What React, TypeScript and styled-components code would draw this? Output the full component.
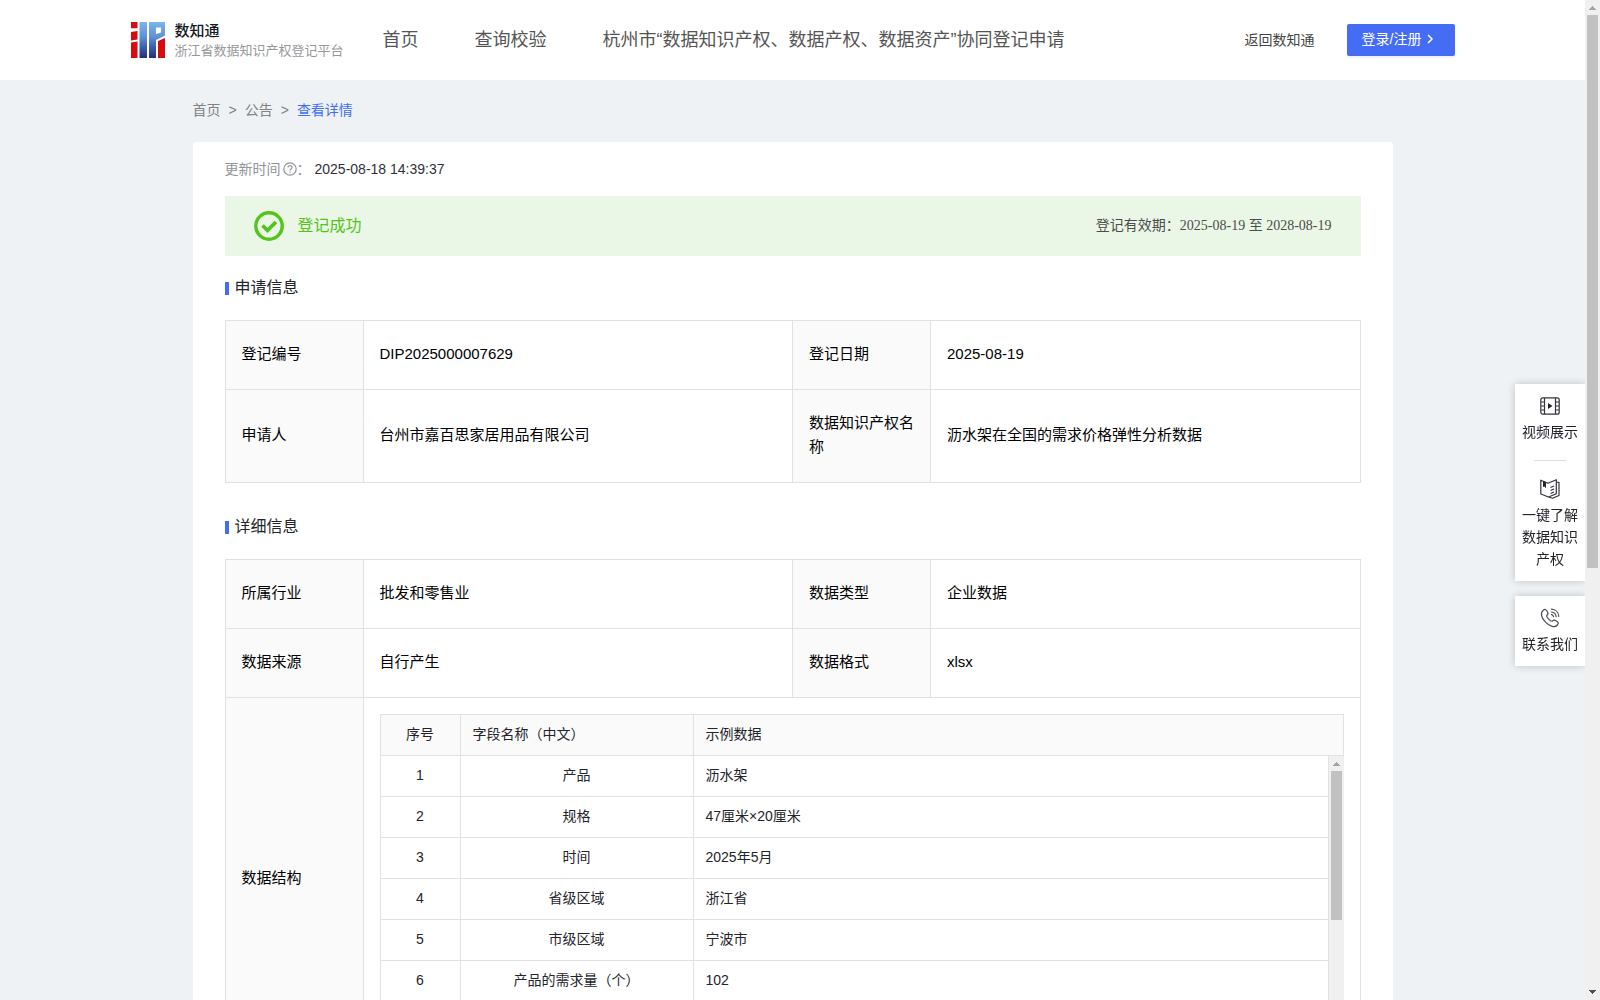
import React from "react";
import styled, { createGlobalStyle, css } from "styled-components";

const GlobalStyle = createGlobalStyle`
  *, *::before, *::after { box-sizing: border-box; }
  body {
    margin: 0;
    background: #eef2f5;
    color: #23242b;
    font: 14px/22px "Liberation Sans", "Noto Sans CJK SC", sans-serif;
  }
  a { color: inherit; text-decoration: none; }
`;

const Shell = styled.div`
  display: flex;
  height: 100vh;
`;
const Viewport = styled.div`
  flex: 1;
  min-width: 0;
  overflow-y: auto;
  scrollbar-width: none;
`;

const Rail = styled.div`
  display: flex;
  flex-direction: column;
  align-items: center;
  flex: none;
  width: 15px;
  background: #f0f0f0;
`;
const Track = styled.div`
  flex: 1;
  width: 11px;
`;
const Thumb = styled.div<{ $size: string }>`
  height: ${(p) => p.$size};
  background: #c1c1c1;
`;

const Header = styled.header`
  height: 80px;
  background: #fff;
`;
const HeaderInner = styled.div`
  display: flex;
  align-items: center;
  width: min(1324px, 100%);
  height: 100%;
  margin: 0 auto;
`;
const Brand = styled.a`
  display: flex;
  align-items: center;
  gap: 10px;
  width: 252px;
`;
const BrandText = styled.span`
  display: flex;
  flex-direction: column;
  padding-top: 2px;
  white-space: nowrap;
`;
const BrandName = styled.strong`
  font-size: 15px;
  line-height: 20px;
  font-weight: 500;
  color: #16181d;
`;
const BrandSub = styled.span`
  font-size: 13px;
  line-height: 20px;
  color: #97989c;
`;
const Nav = styled.nav`
  display: flex;
  flex: 1;
  gap: 56px;
  font-size: 18px;
  line-height: 24px;
  color: #555;
  white-space: nowrap;
`;
const BackLink = styled.a`
  margin-right: 32px;
  color: #444;
  white-space: nowrap;
`;
const LoginButton = styled.button`
  display: flex;
  align-items: center;
  gap: 2px;
  width: 108px;
  height: 32px;
  padding: 0 15px 2px;
  border: 0;
  border-radius: 2px;
  background: #446cf5;
  box-shadow: 0 2px 0 rgba(0, 0, 0, 0.05);
  color: #fff;
  font: inherit;
  white-space: nowrap;
`;

const Page = styled.main`
  width: min(1200px, 100%);
  margin: 0 auto;
`;
const Breadcrumb = styled.nav`
  display: flex;
  gap: 8px;
  padding: 19px 0 21px;
  color: #808285;
`;
const Current = styled.a`
  color: #446cf5;
`;
const Card = styled.article`
  padding: 16px 32px;
  border-radius: 4px;
  background: #fff;
`;
const Updated = styled.div`
  display: flex;
  align-items: center;
  color: #929398;
  svg { margin-left: 2px; }
  time { margin-left: 4px; color: #303138; }
`;
const Banner = styled.div`
  display: flex;
  align-items: center;
  gap: 14px;
  height: 60px;
  margin-top: 16px;
  padding: 0 29px;
  background: #ebf7e6;
`;
const Status = styled.span`
  flex: 1;
  font-size: 16px;
  color: #52c41a;
`;
const Validity = styled.span`
  color: #4a4d4a;
  font-family: "Liberation Serif", "Noto Sans CJK SC", serif;
`;
const SectionTitle = styled.h2`
  display: flex;
  align-items: center;
  gap: 6px;
  margin: 20px 0;
  font-size: 16px;
  line-height: 24px;
  font-weight: 400;
  &::before {
    content: "";
    width: 4px;
    height: 13px;
    background: #446cf5;
  }
`;
const Info = styled.table`
  width: 100%;
  margin-bottom: 32px;
  border-collapse: collapse;
  table-layout: fixed;
  font-size: 15px;
  line-height: 24px;
  color: #000;
`;
const Label = styled.th`
  padding: 21px 16px 23px;
  border: 1px solid #e1e1e1;
  background: #fafafa;
  font-weight: 400;
  text-align: left;
`;
const Value = styled.td<{ $nested?: boolean }>`
  padding: ${(p) => (p.$nested ? "16px" : "21px 16px 23px")};
  border: 1px solid #e1e1e1;
`;
const LabelCol = styled.col`
  width: 138px;
`;

const FieldsBox = styled.div`
  position: relative;
`;
const FieldsRail = styled(Rail)`
  position: absolute;
  top: 42px;
  right: 0;
  bottom: 0;
`;
const Fields = styled.table`
  display: block;
  font-size: 14px;
  line-height: 20px;
  color: #23242b;
  tr {
    display: grid;
    grid-template-columns: 80px 233px 1fr;
  }
`;
const FieldsHead = styled.thead`
  display: block;
  border: 1px solid #e1e1e1;
  background: #fafafa;
`;
const FieldsBody = styled.tbody`
  display: block;
  height: 287px;
  margin-right: 15px;
  border-left: 1px solid #e1e1e1;
`;
const fieldCell = css<{ $center?: boolean }>`
  height: 40px;
  padding: 9px 12px 11px;
  border-right: 1px solid #e1e1e1;
  font-weight: 400;
  text-align: ${(p) => (p.$center ? "center" : "left")};
`;
const FieldHead = styled.th<{ $center?: boolean }>`
  ${fieldCell}
  &:last-child { border-right: 0; }
`;
const FieldCell = styled.td<{ $center?: boolean }>`
  ${fieldCell}
  height: 41px;
  border-bottom: 1px solid #e1e1e1;
`;

const Side = styled.aside`
  position: fixed;
  top: 384px;
  right: 15px;
  display: flex;
  flex-direction: column;
  gap: 15px;
  width: 70px;
  clip-path: inset(-10px 0 -10px -10px);
`;
const SideCard = styled.div`
  display: flex;
  flex-direction: column;
  align-items: center;
  padding: 12px 6px 11px;
  background: #fff;
  box-shadow: 0 0 8px rgba(0, 0, 0, 0.2);
`;
const SideButton = styled.button`
  display: flex;
  flex-direction: column;
  align-items: center;
  gap: 5px;
  width: 100%;
  padding: 0;
  border: 0;
  background: none;
  color: #23242b;
  font: inherit;
`;
const Rule = styled.hr`
  width: 32px;
  margin: 17px 0 18px;
  border: 0;
  border-top: 1px solid #ddd;
`;

const Arrow = ({ down }: { down?: boolean }) => (
  <svg width="15" height="15" viewBox="0 0 15 15" shapeRendering="crispEdges" aria-hidden="true">
    {down ? <path d="M4 5h7L7.500 9z" fill="#505050" /> : <path d="M4 10h7L7.500 6z" fill="#a3a3a3" />}
  </svg>
);

const RailParts = ({ size }: { size: string }) => (
  <>
    <Arrow />
    <Track>
      <Thumb $size={size} />
    </Track>
    <Arrow down />
  </>
);

const Logo = () => (
  <svg width="34" height="36" viewBox="0 0 34 36" aria-hidden="true">
    <defs>
      <linearGradient id="logoBlue" x1="0" y1="0" x2="0" y2="36" gradientUnits="userSpaceOnUse">
        <stop offset="0" stopColor="#7db4ea" />
        <stop offset="0.4" stopColor="#5f93d6" />
        <stop offset="0.7" stopColor="#3f5ea8" />
        <stop offset="1" stopColor="#22307f" />
      </linearGradient>
    </defs>
    <path fill="#d70b10" d="M0 0h6.500v6.200H0zM0 10l6.500-1V17.500L0 18.500zM0 20.500l6.500-1V36H0zM27 19l7-3V36h-7z" />
    <path
      fill="url(#logoBlue)"
      fillRule="evenodd"
      d="M8.500 0h7.500v36H8.500zM18 0h16v13.500L25 18v18h-7zM25 5.500V12l5-1.500v-5z"
    />
  </svg>
);

const HelpIcon = () => (
  <svg width="14" height="14" viewBox="0 0 14 14" fill="none" stroke="#929398" strokeWidth="1.200" aria-hidden="true">
    <circle cx="7" cy="7" r="6.200" />
    <path d="M5 5.600c0-2.600 4-2.500 4 0C9 7 7 6.900 7 8.500M7 9.500v1.200" />
  </svg>
);

const SuccessIcon = () => (
  <svg width="30" height="30" viewBox="0 0 30 30" fill="none" stroke="#52c41a" aria-hidden="true">
    <circle cx="15" cy="15" r="13.200" strokeWidth="3.400" />
    <path d="M8.500 14.500l5 4.800 8.500-8.300" strokeWidth="3.800" />
  </svg>
);

const VideoIcon = () => (
  <svg width="20" height="20" viewBox="0 0 20 20" fill="none" stroke="#33343b" strokeWidth="1.200" aria-hidden="true">
    <rect x="0.800" y="1.800" width="18.400" height="16.400" rx="2" />
    <path d="M4.500 2v16M15.500 2v16M1 6h3.500M1 10h3.500M1 14h3.500M15.500 6H19M15.500 10H19M15.500 14H19" />
    <path d="M8 7v6l4.500-3z" fill="#23242b" stroke="none" />
  </svg>
);

const BookIcon = () => (
  <svg
    width="20"
    height="20"
    viewBox="0 0 20 20"
    fill="none"
    stroke="#33343b"
    strokeWidth="1.200"
    strokeLinejoin="round"
    aria-hidden="true"
  >
    <path d="M.8 1.200 8 4.200l8.300-3.500v14L8.500 18 .8 15zM16.300 3l2.700.3v13.200l-6.500 2.800-4-1.300" />
    <path d="M10.500 8.500l3.500-1.500M10.500 11.500L14 10M10.500 14.500L14 13" />
    <path d="M3 2l3 1.200v6L4.500 7.500 3 8z" fill="#23242b" stroke="none" />
  </svg>
);

const PhoneIcon = () => (
  <svg
    width="20"
    height="20"
    viewBox="0 0 20 20"
    fill="none"
    stroke="#4a4b52"
    strokeWidth="1.200"
    strokeLinejoin="round"
    strokeLinecap="round"
    aria-hidden="true"
  >
    <path d="M3.200 2.200C5 .8 6 1.200 7.500 4c1 1.800.5 2.500-.7 3.500-1 1 4.200 6.700 5.600 5.600 1.200-1.200 1.900-1.400 3.600-.4 2.600 1.500 2.900 2.500 1.400 4.300-2.500 3-7.400 1.800-11.900-2.900C.8 9.400.4 4.600 3.200 2.200z" />
    <path d="M11.500 1.200c4 .2 7 3.200 7.300 7.200M11.500 4c2.600.3 4.400 2 4.700 4.700M11.500 6.700c1.200.2 1.800.8 2 2" />
  </svg>
);

const FIELDS = [
  ["产品", "沥水架"],
  ["规格", "47厘米×20厘米"],
  ["时间", "2025年5月"],
  ["省级区域", "浙江省"],
  ["市级区域", "宁波市"],
  ["产品的需求量（个）", "102"],
];

const Columns = () => (
  <colgroup>
    <LabelCol />
    <col />
    <LabelCol />
    <col />
  </colgroup>
);

const InfoRow = ({ cells }: { cells: string[] }) => (
  <tr>
    <Label scope="row">{cells[0]}</Label>
    <Value>{cells[1]}</Value>
    <Label scope="row">{cells[2]}</Label>
    <Value>{cells[3]}</Value>
  </tr>
);

export default function App() {
  return (
    <Shell>
      <GlobalStyle />
      <Viewport>
        <Header>
          <HeaderInner>
            <Brand href="#">
              <Logo />
              <BrandText>
                <BrandName>数知通</BrandName>
                <BrandSub>浙江省数据知识产权登记平台</BrandSub>
              </BrandText>
            </Brand>
            <Nav>
              <a href="#">首页</a>
              <a href="#">查询校验</a>
              <a href="#">杭州市“数据知识产权、数据产权、数据资产”协同登记申请</a>
            </Nav>
            <BackLink href="#">返回数知通</BackLink>
            <LoginButton type="button">
              登录/注册
              <svg width="14" height="14" viewBox="0 0 14 14" fill="none" stroke="#fff" strokeWidth="1.500" aria-hidden="true">
                <path d="M5 3l4 4-4 4" />
              </svg>
            </LoginButton>
          </HeaderInner>
        </Header>
        <Page>
          <Breadcrumb>
            <a href="#">首页</a>
            <span>&gt;</span>
            <a href="#">公告</a>
            <span>&gt;</span>
            <Current href="#">查看详情</Current>
          </Breadcrumb>
          <Card>
            <Updated>
              更新时间
              <HelpIcon />
              ：<time>2025-08-18 14:39:37</time>
            </Updated>
            <Banner>
              <SuccessIcon />
              <Status>登记成功</Status>
              <Validity>登记有效期：2025-08-19 至 2028-08-19</Validity>
            </Banner>
            <SectionTitle>申请信息</SectionTitle>
            <Info>
              <Columns />
              <tbody>
                <InfoRow cells={["登记编号", "DIP2025000007629", "登记日期", "2025-08-19"]} />
                <InfoRow
                  cells={["申请人", "台州市嘉百思家居用品有限公司", "数据知识产权名称", "沥水架在全国的需求价格弹性分析数据"]}
                />
              </tbody>
            </Info>
            <SectionTitle>详细信息</SectionTitle>
            <Info>
              <Columns />
              <tbody>
                <InfoRow cells={["所属行业", "批发和零售业", "数据类型", "企业数据"]} />
                <InfoRow cells={["数据来源", "自行产生", "数据格式", "xlsx"]} />
                <tr>
                  <Label scope="row">数据结构</Label>
                  <Value $nested colSpan={3}>
                    <FieldsBox>
                      <Fields>
                        <FieldsHead>
                          <tr>
                            <FieldHead $center>序号</FieldHead>
                            <FieldHead>字段名称（中文）</FieldHead>
                            <FieldHead>示例数据</FieldHead>
                          </tr>
                        </FieldsHead>
                        <FieldsBody>
                          {FIELDS.map(([name, sample], i) => (
                            <tr key={name}>
                              <FieldCell $center>{i + 1}</FieldCell>
                              <FieldCell $center>{name}</FieldCell>
                              <FieldCell>{sample}</FieldCell>
                            </tr>
                          ))}
                        </FieldsBody>
                      </Fields>
                      <FieldsRail aria-hidden="true">
                        <RailParts size="58%" />
                      </FieldsRail>
                    </FieldsBox>
                  </Value>
                </tr>
              </tbody>
            </Info>
          </Card>
        </Page>
      </Viewport>
      <Rail aria-hidden="true">
        <RailParts size="57%" />
      </Rail>
      <Side>
        <SideCard>
          <SideButton type="button">
            <VideoIcon />
            视频展示
          </SideButton>
          <Rule />
          <SideButton type="button">
            <BookIcon />
            一键了解数据知识产权
          </SideButton>
        </SideCard>
        <SideCard>
          <SideButton type="button">
            <PhoneIcon />
            联系我们
          </SideButton>
        </SideCard>
      </Side>
    </Shell>
  );
}
